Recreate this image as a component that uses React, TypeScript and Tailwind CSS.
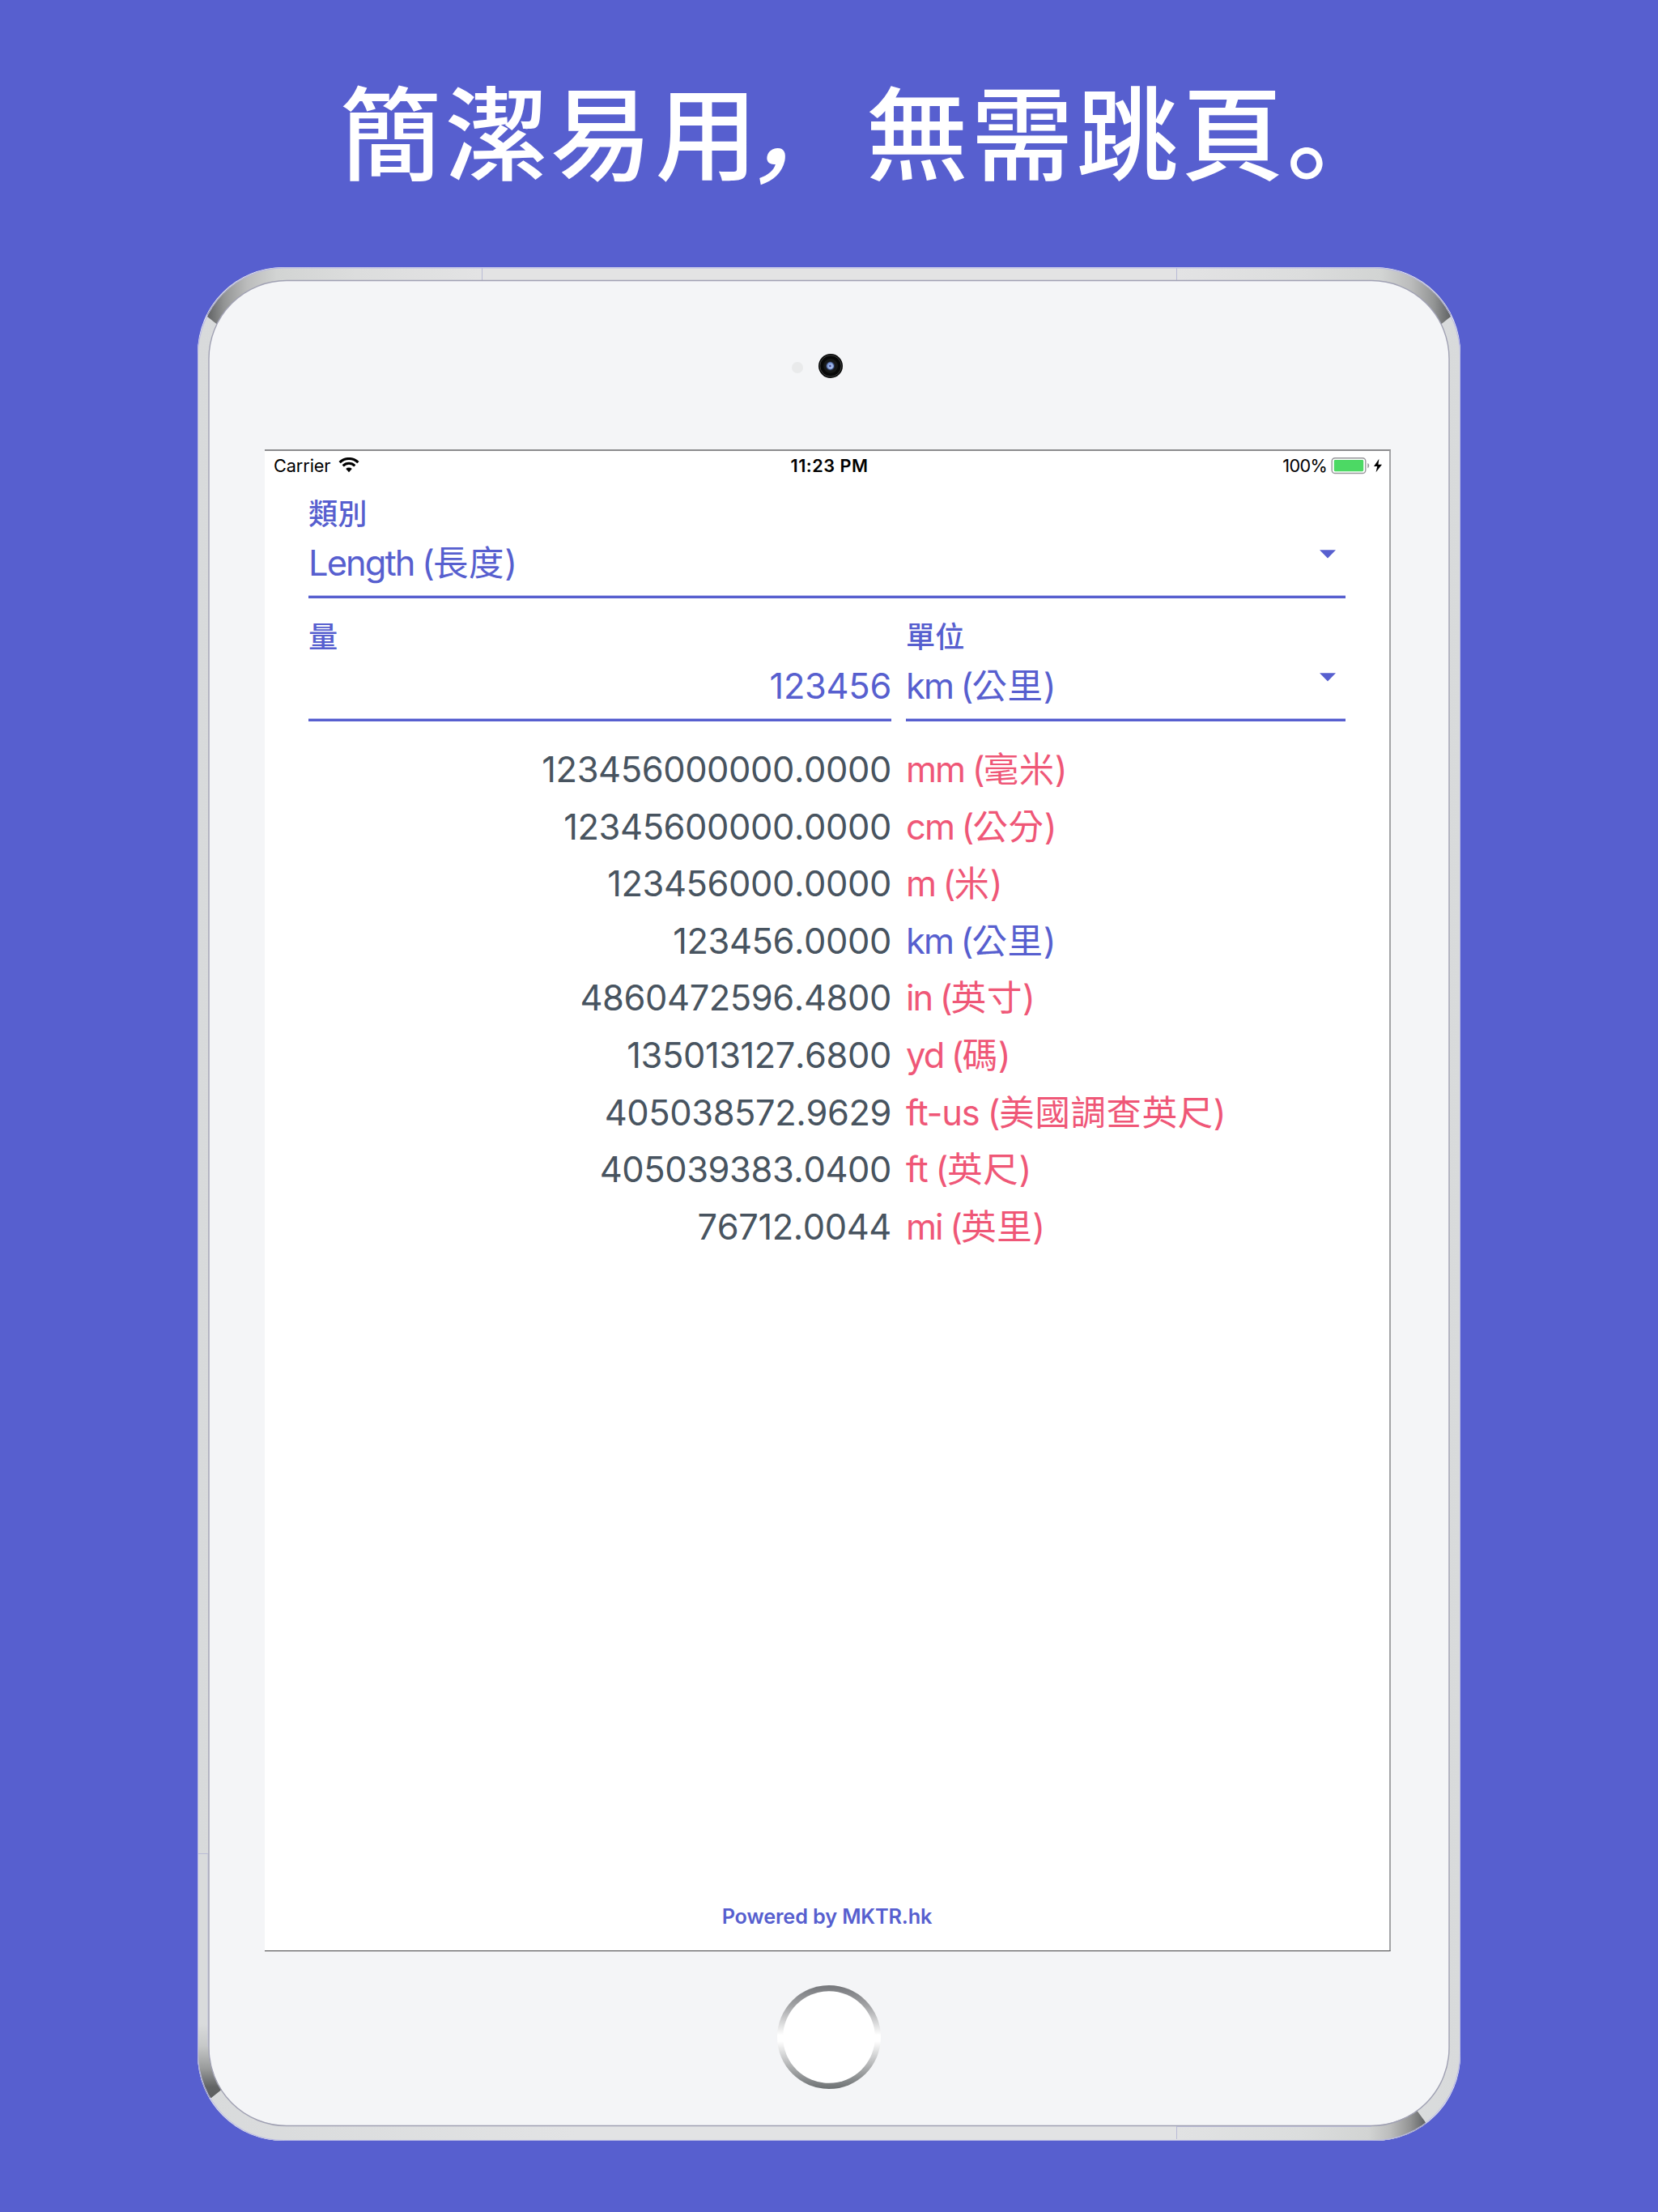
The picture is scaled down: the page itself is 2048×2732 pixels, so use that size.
type Row = { value: string; unit: string; name: string; active?: boolean };

const rows: Row[] = [
  { value: '123456000000.0000', unit: 'mm', name: '毫米' },
  { value: '12345600000.0000', unit: 'cm', name: '公分' },
  { value: '123456000.0000', unit: 'm', name: '米' },
  { value: '123456.0000', unit: 'km', name: '公里', active: true },
  { value: '4860472596.4800', unit: 'in', name: '英寸' },
  { value: '135013127.6800', unit: 'yd', name: '碼' },
  { value: '405038572.9629', unit: 'ft-us', name: '美國調查英尺' },
  { value: '405039383.0400', unit: 'ft', name: '英尺' },
  { value: '76712.0044', unit: 'mi', name: '英里' },
];

// Metal rim, corner reflections and antenna seams. One unit is one pixel.
function Rim() {
  const ring =
    'M106 0.5H1454A106 108 0 0 1 1560 108.5V2206A106 108 0 0 1 1454 2314H106A106 108 0 0 1 0 2206V108.5A106 108 0 0 1 106 0.5Z' +
    'M110 16.5A96 96 0 0 0 14 112.5V2198A96 97 0 0 0 110 2295H1450A96 97 0 0 0 1546 2198V112.5A96 96 0 0 0 1450 16.5Z';
  return (
    <svg className="absolute inset-0" width="1560" height="2314" viewBox="0 0 1560 2314" fill="none">
      <defs>
        <linearGradient id="top" gradientUnits="userSpaceOnUse" x1="12" y1="0" x2="1548" y2="0">
          <stop offset="0" stopColor="#606263" />
          <stop offset="0.014" stopColor="#949696" />
          <stop offset="0.032" stopColor="#bbbcbc" />
          <stop offset="0.056" stopColor="#d2d4d3" />
          <stop offset="0.12" stopColor="#dcdddd" />
          <stop offset="0.22" stopColor="#e3e3e4" />
          <stop offset="0.78" stopColor="#e3e3e4" />
          <stop offset="0.88" stopColor="#dcdddd" />
          <stop offset="0.944" stopColor="#d2d4d3" />
          <stop offset="0.968" stopColor="#bbbcbc" />
          <stop offset="0.986" stopColor="#949696" />
          <stop offset="1" stopColor="#606263" />
        </linearGradient>
        <linearGradient id="bl" gradientUnits="userSpaceOnUse" x1="0" y1="2170" x2="0" y2="2260">
          <stop offset="0" stopColor="#d9dbdc" />
          <stop offset="0.3" stopColor="#c6c8c8" />
          <stop offset="0.62" stopColor="#979999" />
          <stop offset="0.86" stopColor="#626465" />
          <stop offset="1" stopColor="#5d5f60" />
        </linearGradient>
        <linearGradient id="br" gradientUnits="userSpaceOnUse" x1="1209" y1="0" x2="1517" y2="0">
          <stop offset="0" stopColor="#e1e2e3" />
          <stop offset="0.5" stopColor="#dbdddd" />
          <stop offset="0.77" stopColor="#d2d4d3" />
          <stop offset="0.86" stopColor="#bbbcbc" />
          <stop offset="0.94" stopColor="#929393" />
          <stop offset="1" stopColor="#606263" />
        </linearGradient>
        <linearGradient id="bottom" gradientUnits="userSpaceOnUse" x1="0" y1="0" x2="1560" y2="0">
          <stop offset="0" stopColor="#d8dadb" />
          <stop offset="0.3" stopColor="#e2e3e4" />
          <stop offset="0.8" stopColor="#e2e3e4" />
          <stop offset="1" stopColor="#d8dadb" />
        </linearGradient>
        <clipPath id="cTop"><path d="M12 61L24 70.5L120 130H1440L1536 70.5L1548 61V0H12Z" /></clipPath>
        <clipPath id="cBl"><path d="M0 1959.5H20V2170L32 2249L17 2261L0 2261Z" /></clipPath>
        <clipPath id="cBr"><path d="M1209 2290V2314H1530L1516 2290L1505 2275L1400 2290Z" /></clipPath>
      </defs>
      <path d={ring} fillRule="evenodd" fill="url(#bottom)" />
      <path d={ring} fillRule="evenodd" fill="url(#top)" clipPath="url(#cTop)" />
      <path d={ring} fillRule="evenodd" fill="url(#bl)" clipPath="url(#cBl)" />
      <path d={ring} fillRule="evenodd" fill="url(#br)" clipPath="url(#cBr)" />
      <path d="M351.5 1V16M1209.5 1V16M1209.5 2297V2312M1 1959.5H13" stroke="#b9bbd6" />
      <path d="M13 1959V2198M1209 2296.5H1450" stroke="#c0c2dc" />
      <rect x="0.5" y="1" width="1559" height="2312.5" rx="106" ry="108" stroke="#b9bae6" />
      <rect x="14" y="16.5" width="1532" height="2279" rx="96" ry="96.5" stroke="#a0a1b3" strokeWidth="1.4" />
    </svg>
  );
}

function Wifi() {
  return (
    <svg width="26" height="19" viewBox="0 0 26 19" fill="none" stroke="#000">
      <path d="M1.6 6.2A16.2 16.2 0 0 1 24.4 6.2" strokeWidth="3.2" />
      <path d="M5.7 10.3A10.4 10.4 0 0 1 20.3 10.3" strokeWidth="3.1" />
      <path d="M9.2 14A5.6 5.6 0 0 1 16.8 14L13 18.2Z" fill="#000" stroke="none" />
    </svg>
  );
}

function Battery() {
  return (
    <svg width="64" height="22" viewBox="0 0 64 22">
      <rect x="1.2" y="1.7" width="41.6" height="18.8" rx="3.8" fill="#fff" stroke="#97979a" strokeWidth="1.4" />
      <rect x="3.8" y="4" width="36.4" height="14.2" rx="1.4" fill="#4cd964" />
      <path d="M45.3 8C47.8 8.7 47.8 13.5 45.3 14.2Z" fill="#97979a" />
      <path d="M59.4 2.7L53 12H57.2L55.6 19.2L63 9.7H58.4Z" fill="#000" />
    </svg>
  );
}

function Caret() {
  return (
    <svg width="20" height="11" viewBox="0 0 20 11">
      <path d="M0 0.3H20L10 10.6Z" fill="#575fcf" />
    </svg>
  );
}

function Unit({ unit, name }: { unit: string; name: string }) {
  const latin = unit.startsWith('ft') ? 'tracking-[-1.2px]' : 'tracking-[-1.9px]';
  return (
    <span className={`${latin} whitespace-nowrap [word-spacing:-0.8px]`}>
      {unit} (<span className="tracking-[0.7px]">{name}</span>)
    </span>
  );
}

function Field({ label, amount, unit, name }: { label: string; amount?: string; unit?: string; name?: string }) {
  return (
    <div className="h-[152px] border-b-3 border-[#575fcf] pt-[24px] shadow-[inset_0_-1px_0_#bfc2ee]">
      <div className="h-[48px] text-[36.2px] leading-[48px] font-medium">{label}</div>
      <div className="flex h-[72px] items-start justify-between text-[43.4px] leading-[72px]">
        {amount && <span className="ml-auto tracking-[-0.3px] [font-kerning:none]">{amount}</span>}
        {unit && name && (
          <>
            <Unit unit={unit} name={name} />
            <span className="mt-[20px] mr-[12px]">
              <Caret />
            </span>
          </>
        )}
      </div>
    </div>
  );
}

function Screen() {
  return (
    <div className="mx-[83px] flex h-[1855px] w-[1391px] flex-col border-t-2 border-r-2 border-b border-t-[#8b8b8d] border-r-[#a3a4a6] border-b-[#424244] bg-white">
      <div className="grid h-[30px] grid-cols-[1fr_auto_1fr] items-center pt-[5px] text-[21.7px] leading-[22px] text-black">
        <div className="flex items-center gap-[10px] pl-[11px]">
          <span className="tracking-[-0.1px]">Carrier</span>
          <Wifi />
        </div>
        <span className="pl-[6px] font-semibold tracking-[0.5px]">11:23 PM</span>
        <div className="flex items-center justify-end gap-[5px] pr-[8px]">
          <span className="tracking-[-0.7px]">100%</span>
          <Battery />
        </div>
      </div>

      <div className="ml-[54px] w-[1281px] text-[#575fcf]">
        <Field label="類別" unit="Length" name="長度" />
        <div className="grid grid-cols-[720px_543px] gap-[18px]">
          <Field label="量" amount="123456" />
          <Field label="單位" unit="km" name="公里" />
        </div>
      </div>

      <div className="mt-[24px] ml-[54px] w-[1281px] text-[43.4px] leading-[70.6px]">
        {rows.map((r) => (
          <div key={r.unit} className="grid h-[70.6px] grid-cols-[720px_543px] gap-[18px]">
            <span className="text-right tracking-[-0.4px] text-[#485460] [font-kerning:none]">{r.value}</span>
            <span className={r.active ? 'text-[#575fcf]' : 'text-[#ef5777]'}>
              <Unit unit={r.unit} name={r.name} />
            </span>
          </div>
        ))}
      </div>

      <div className="mt-auto h-[86px] text-center text-[25.3px] leading-[88px] font-semibold tracking-[-0.15px] text-[#575fcf]">
        Powered by MKTR.hk
      </div>
    </div>
  );
}

export default function App() {
  return (
    <div
      lang="zh-Hant"
      className="flex h-[2732px] w-[2048px] flex-col items-center overflow-hidden bg-[#575fcf] font-[Inter,'Noto_Sans_CJK_TC',sans-serif]"
    >
      <h1
        lang="ja"
        className="h-[330px] pt-[66px] pl-[91px] font-['Noto_Sans_CJK_JP',sans-serif] text-[126px] leading-[184px] font-medium tracking-[4px] whitespace-nowrap text-white"
      >
        簡潔易用<span className="inline-block -translate-x-[7px] -skew-x-12">，</span>無需跳頁。
      </h1>

      <div className="relative h-[2314px] w-[1560px] rounded-[106px] bg-[#f4f5f7]">
        <Rim />
        <div className="relative flex h-full flex-col">
          <div className="flex h-[225px] items-start pt-[107px] pl-[733.5px]">
            <div className="mt-[10px] h-[14px] w-[14px] rounded-full bg-[#e9eaeb]" />
            <svg className="ml-[19.5px]" width="30" height="30" viewBox="0 0 30 30">
              <circle cx="15" cy="15" r="15" fill="#070808" />
              <circle cx="15" cy="15" r="13.2" fill="none" stroke="#4b4d4e" strokeWidth="0.8" />
              <circle cx="15" cy="15" r="9" fill="#161817" />
              <circle cx="14.6" cy="15" r="5.6" fill="#2d3550" />
              <circle cx="14.6" cy="15" r="4.4" fill="#7d9bd8" />
              <circle cx="15" cy="15.4" r="2.6" fill="#b3c8ee" />
              <circle cx="14.4" cy="15" r="1.5" fill="#4b529c" />
            </svg>
          </div>
          <Screen />
          <svg className="mt-[42px] ml-[716.3px]" width="128" height="128" viewBox="0 0 128 128">
            <defs>
              <linearGradient id="home" x1="0" y1="0" x2="0" y2="1">
                <stop offset="0" stopColor="#75777b" />
                <stop offset="0.2" stopColor="#a3a4a6" />
                <stop offset="0.48" stopColor="#fff" />
                <stop offset="0.54" stopColor="#fff" />
                <stop offset="0.8" stopColor="#aaacad" />
                <stop offset="1" stopColor="#6c7072" />
              </linearGradient>
            </defs>
            <circle cx="64" cy="64" r="64" fill="url(#home)" />
            <circle cx="64" cy="64" r="56.8" fill="#fff" />
          </svg>
        </div>
      </div>
    </div>
  );
}
